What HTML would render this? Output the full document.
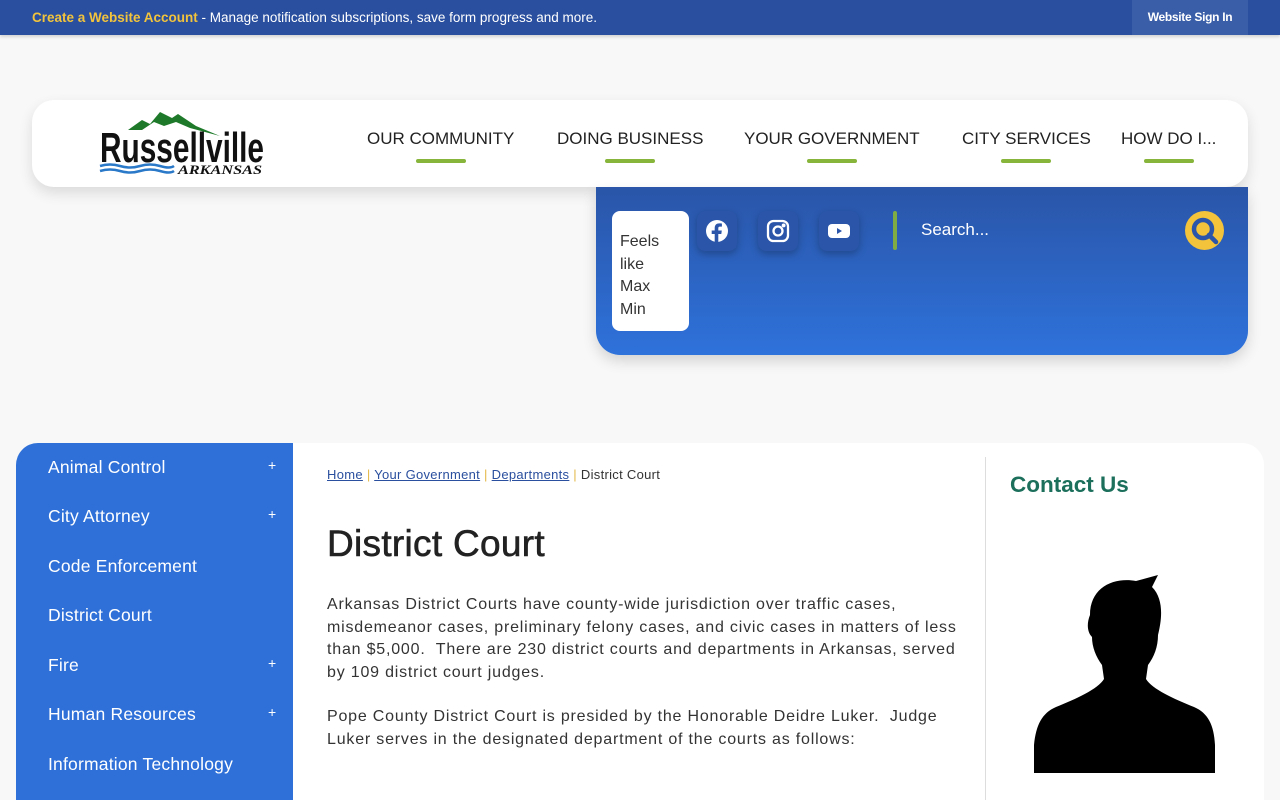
<!DOCTYPE html>
<html><head><meta charset="utf-8"><style>
*{margin:0;padding:0;box-sizing:border-box}
body{width:1280px;height:800px;overflow:hidden;background:#f8f8f8;font-family:"Liberation Sans",sans-serif;position:relative}
.top{position:absolute;left:0;top:0;width:1280px;height:35px;background:#2a4f9e;box-shadow:0 2px 3px rgba(0,0,0,.15)}
.top .msg{position:absolute;left:32px;top:10px;font-size:13.5px;color:#fff;letter-spacing:0}
.top .msg b{color:#f2c33c}
.top .sign{position:absolute;left:1132px;top:0;width:116px;height:35px;background:#3a5ea8;color:#fff;font-size:12px;font-weight:bold;text-align:center;line-height:35px;letter-spacing:-.3px}
.hdr{position:absolute;left:32px;top:100px;width:1216px;height:87px;background:#fff;border-radius:22px;box-shadow:0 6px 14px rgba(0,0,0,.12)}
.nav a{position:absolute;top:29px;font-size:17px;color:#222;text-decoration:none;letter-spacing:0}
.nav a:after{content:"";position:absolute;left:50%;margin-left:-25px;bottom:-14px;width:50px;height:4px;background:#87b43a;border-radius:2px}
.blue{position:absolute;left:596px;top:187px;width:652px;height:168px;background:linear-gradient(#2a55a8,#2e72db);border-radius:0 0 24px 24px;box-shadow:0 6px 14px rgba(0,0,0,.15)}
.wx{position:absolute;left:16px;top:24px;width:77px;height:120px;background:#fff;border-radius:8px;padding:20px 8px;font-size:16px;line-height:22.5px;color:#333}
.soc{position:absolute;top:24px;width:40px;height:40px;border-radius:8px;background:#2a55a8;box-shadow:0 3px 8px rgba(0,0,0,.25)}
.soc svg{position:absolute;left:8px;top:8px}
.bar{position:absolute;left:297px;top:24px;width:4px;height:39px;background:#7fac43;border-radius:2px}
.srch{position:absolute;left:325px;top:33px;color:#fff;font-size:17px}
.sbtn{position:absolute;left:589px;top:24px;width:39px;height:39px;border-radius:50%;background:#f3c33b}
.side{position:absolute;left:16px;top:443px;width:277px;height:357px;background:#2e70d8;border-radius:22px 0 0 0}
.side div{position:absolute;left:32px;color:#fff;font-size:17.5px;letter-spacing:.2px}
.side span{position:absolute;left:252px;color:#fff;font-size:14px}
.main{position:absolute;left:293px;top:443px;width:971px;height:357px;background:#fff;border-radius:0 22px 0 0}
.bc{position:absolute;left:34px;top:24px;font-size:13px;color:#333;letter-spacing:.3px}
.bc a{color:#2a4f9e;text-decoration:underline}
.bc i{color:#e5b94a;font-style:normal}
h1{position:absolute;left:34px;top:80px;font-size:37px;font-weight:normal;color:#222;letter-spacing:.3px;-webkit-text-stroke:.6px #222}
.p{position:absolute;left:34px;width:680px;font-size:16px;line-height:22.5px;color:#333;letter-spacing:.8px;white-space:nowrap}
.vl{position:absolute;left:692px;top:14px;width:1px;height:343px;background:#ddd}
.cu{position:absolute;left:717px;top:29px;font-size:22.5px;color:#1b6f5b;font-weight:bold}
</style></head><body>
<div class="top"><div class="msg"><b>Create a Website Account</b> - Manage notification subscriptions, save form progress and more.</div><div class="sign">Website Sign In</div></div>
<div class="hdr">
<svg style="position:absolute;left:66px;top:6px" width="170" height="72" viewBox="0 0 170 72">
<path d="M30 24 L44 14 L52 18 L62 6 L74 12 L80 8 L98 20 L122 30 L92 22 L78 16 L66 20 L56 16 L44 24 Z" fill="#1e7a2a"/>
<text x="2" y="56" font-family="Liberation Sans Narrow,Liberation Sans,sans-serif" font-weight="bold" font-size="42" fill="#111" textLength="164" lengthAdjust="spacingAndGlyphs">Russellville</text>
<path d="M2 60 q10 -3 20 0 t20 0 t20 0 t14 0 M2 65 q10 -3 20 0 t20 0 t20 0 t14 0" stroke="#2a78c8" stroke-width="2.5" fill="none"/>
<text x="80" y="68" font-family="Liberation Serif,serif" font-weight="bold" font-style="italic" font-size="13" fill="#111" textLength="84" lengthAdjust="spacingAndGlyphs">ARKANSAS</text>
</svg>
<div class="nav"><a style="left:335px">OUR COMMUNITY</a><a style="left:525px">DOING BUSINESS</a><a style="left:712px">YOUR GOVERNMENT</a><a style="left:930px">CITY SERVICES</a><a style="left:1089px">HOW DO I...</a></div>
</div>
<div class="blue">
<div class="wx">Feels<br>like<br>Max<br>Min</div>
<div class="soc" style="left:101px"><svg width="24" height="24" viewBox="0 0 24 24"><circle cx="12" cy="12" r="11" fill="#fff"/><path d="M13.3 24V15h3l.5-3.5h-3.5V9.3c0-1 .3-1.7 1.8-1.7h1.8V4.5c-.3 0-1.4-.1-2.7-.1-2.7 0-4.5 1.6-4.5 4.6v2.5H6.7V15h3v9z" fill="#2a55a8"/></svg></div>
<div class="soc" style="left:162px"><svg width="24" height="24" viewBox="0 0 24 24" fill="none" stroke="#fff" stroke-width="2.3"><rect x="2" y="2" width="20" height="20" rx="5.5"/><circle cx="12" cy="12" r="4.5"/><circle cx="17.6" cy="6.4" r=".8" fill="#fff"/></svg></div>
<div class="soc" style="left:223px"><svg width="24" height="24" viewBox="0 0 24 24"><rect x="1" y="5" width="22" height="14" rx="4" fill="#fff"/><path d="M10 9l5 3-5 3z" fill="#2a55a8"/></svg></div>
<div class="bar"></div>
<div class="srch">Search...</div>
<div class="sbtn"><svg width="39" height="39" viewBox="0 0 39 39"><circle cx="18" cy="18" r="9" fill="none" stroke="#2a55a8" stroke-width="4.5"/><path d="M24 24l7 7" stroke="#2a55a8" stroke-width="4.5" stroke-linecap="round"/></svg></div>
</div>
<div class="side">
<div style="top:14px">Animal Control</div><span style="top:14px">+</span>
<div style="top:63px">City Attorney</div><span style="top:63px">+</span>
<div style="top:113px">Code Enforcement</div>
<div style="top:162px">District Court</div>
<div style="top:212px">Fire</div><span style="top:212px">+</span>
<div style="top:261px">Human Resources</div><span style="top:261px">+</span>
<div style="top:311px">Information Technology</div>
</div>
<div class="main">
<div class="bc"><a>Home</a> <i>|</i> <a>Your Government</a> <i>|</i> <a>Departments</a> <i>|</i> District Court</div>
<h1>District Court</h1>
<div class="p" style="top:151px">Arkansas District Courts have county-wide jurisdiction over traffic cases,<br>misdemeanor cases, preliminary felony cases, and civic cases in matters of less<br>than $5,000.&nbsp; There are 230 district courts and departments in Arkansas, served<br>by 109 district court judges.</div>
<div class="p" style="top:263px">Pope County District Court is presided by the Honorable Deidre Luker.&nbsp; Judge<br>Luker serves in the designated department of the courts as follows:</div>
<div class="vl"></div>
<div class="cu">Contact Us</div>
<svg style="position:absolute;left:741px;top:132px" width="182" height="198" viewBox="0 0 182 198">
<path d="M56 40 C56 12 80 2 102 6 L124 0 L118 12 C130 24 128 44 124 60 C124 72 120 82 114 90 L112 104 C118 114 140 124 160 132 C174 138 180 150 181 170 L181 198 L0 198 L0 170 C2 150 8 138 22 132 C42 124 64 114 70 104 L68 90 C62 82 58 72 58 62 C54 58 52 50 56 40 Z" fill="#000"/>
</svg>
</div>
</body></html>
